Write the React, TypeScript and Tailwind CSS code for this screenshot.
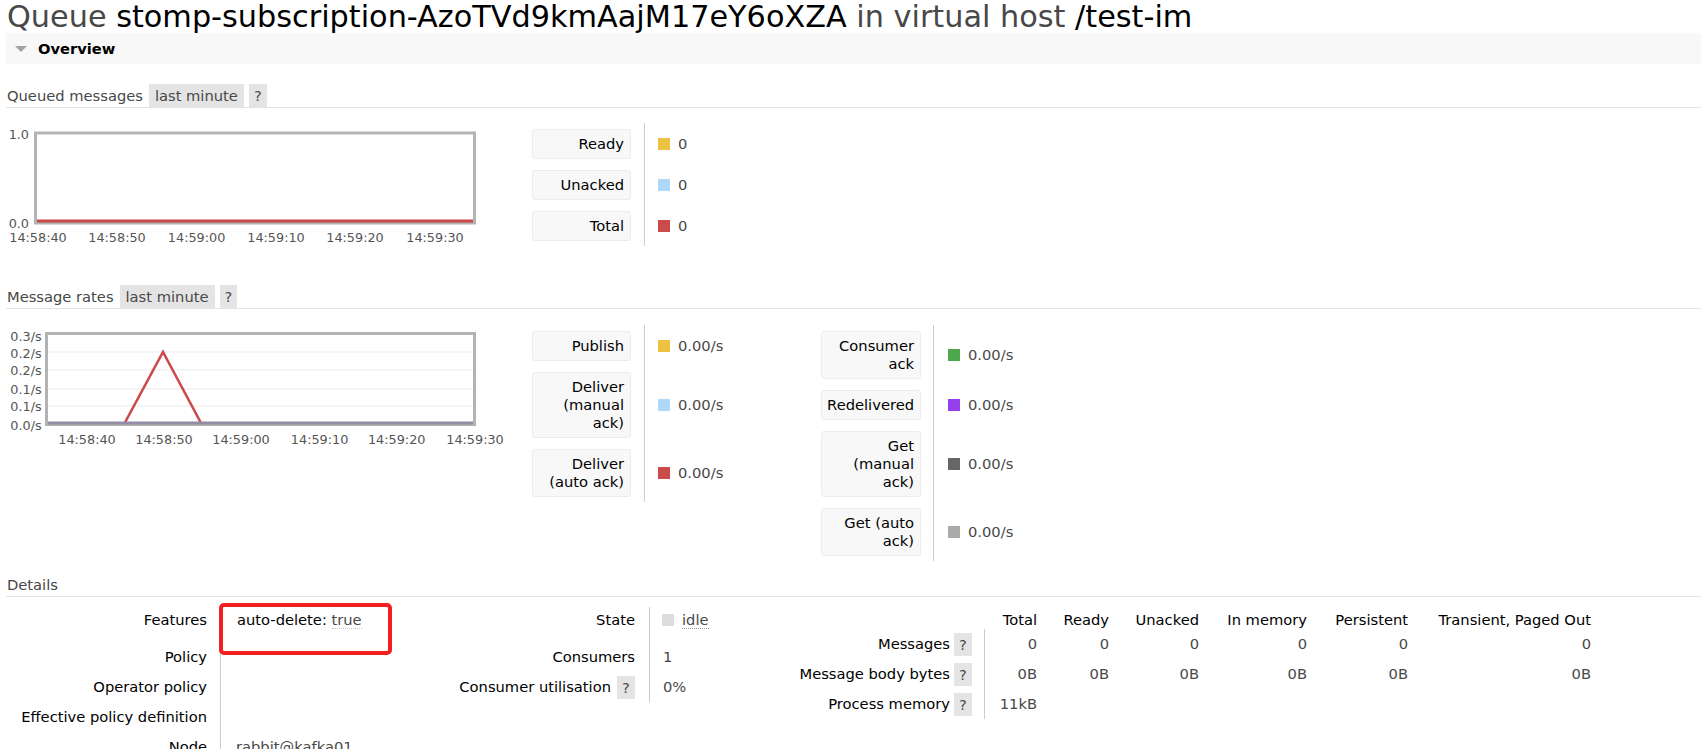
import React from 'react';

type LegendItem = { label: string; swatch: string; value: string };

const queued: LegendItem[] = [
  { label: 'Ready', swatch: 'bg-[#edc240]', value: '0' },
  { label: 'Unacked', swatch: 'bg-[#afd8f8]', value: '0' },
  { label: 'Total', swatch: 'bg-[#cb4b4b]', value: '0' },
];

const ratesLeft: LegendItem[] = [
  { label: 'Publish', swatch: 'bg-[#edc240]', value: '0.00/s' },
  { label: 'Deliver (manual ack)', swatch: 'bg-[#afd8f8]', value: '0.00/s' },
  { label: 'Deliver (auto ack)', swatch: 'bg-[#cb4b4b]', value: '0.00/s' },
];

const ratesRight: LegendItem[] = [
  { label: 'Consumer ack', swatch: 'bg-[#4da74d]', value: '0.00/s' },
  { label: 'Redelivered', swatch: 'bg-[#9440ed]', value: '0.00/s' },
  { label: 'Get (manual ack)', swatch: 'bg-[#666666]', value: '0.00/s' },
  { label: 'Get (auto ack)', swatch: 'bg-[#aaaaaa]', value: '0.00/s' },
];

const SectionHead = ({ title, range }: { title: string; range?: boolean }) => (
  <div className="flex items-start h-[24px] border-b border-[#e2e2e2]">
    <span className="pl-[1px] leading-[23px] text-[#484848]">{title}</span>
    {range && (
      <>
        <span className="ml-[6px] h-[23px] px-[6px] leading-[23px] bg-[#e4e4e4] text-[#484848]">last minute</span>
        <span className="ml-[5px] h-[23px] px-[5px] leading-[23px] bg-[#e4e4e4] text-[#484848]">?</span>
      </>
    )}
  </div>
);

const Legend = ({ items, wide, cols }: { items: LegendItem[]; wide?: boolean; cols: string }) => (
  <div className={cols}>
    {items.map((it) => (
      <React.Fragment key={it.label}>
        <div className={wide ? 'py-[5.5px] pr-[12px]' : 'py-[5.5px] pr-[13px]'}>
          <div
            className={
              wide
                ? 'w-[100px] bg-[#f8f8f8] border border-[#ececec] rounded-[3px] py-[5px] pl-[3px] pr-[6px] text-right leading-[18px] text-black'
                : 'w-[99px] bg-[#f8f8f8] border border-[#ececec] rounded-[3px] py-[5px] pl-[4px] pr-[6px] text-right leading-[18px] text-black'
            }
          >
            {it.label}
          </div>
        </div>
        <div className={wide ? 'border-l border-[#cccccc] pl-[14px] flex items-center py-[5.5px]' : 'border-l border-[#cccccc] pl-[13px] flex items-center py-[5.5px]'}>
          <span className={`w-[12px] h-[12px] shrink-0 ${it.swatch}`} />
          <span className="ml-[8px] text-[#484848]">{it.value}</span>
        </div>
      </React.Fragment>
    ))}
  </div>
);

const tick = { fontFamily: 'DejaVu Sans, sans-serif', fontSize: 12.8, fill: '#545454' };

const QueuedChart = () => {
  const xs = [
    [32, '14:58:40'],
    [111, '14:58:50'],
    [190.6, '14:59:00'],
    [270, '14:59:10'],
    [349, '14:59:20'],
    [429, '14:59:30'],
  ] as const;
  return (
    <svg width="526" height="123" className="block shrink-0">
      <rect x="29.5" y="10" width="439" height="90" fill="white" stroke="#b3b3b3" strokeWidth="3" />
      <line x1="31" y1="98" x2="467" y2="98" stroke="#cb4b4b" strokeWidth="3" />
      <text x="23" y="15.6" textAnchor="end" style={tick}>1.0</text>
      <text x="23" y="104.6" textAnchor="end" style={tick}>0.0</text>
      {xs.map(([x, t]) => (
        <text key={t} x={x} y="118.6" textAnchor="middle" style={tick}>{t}</text>
      ))}
    </svg>
  );
};

const RatesChart = () => {
  const ys = [
    [15.6, '0.3/s'],
    [33.2, '0.2/s'],
    [49.6, '0.2/s'],
    [68.6, '0.1/s'],
    [85.6, '0.1/s'],
    [104.6, '0.0/s'],
  ] as const;
  const xs = [
    [81, '14:58:40'],
    [158, '14:58:50'],
    [235, '14:59:00'],
    [313.6, '14:59:10'],
    [390.7, '14:59:20'],
    [469, '14:59:30'],
  ] as const;
  return (
    <svg width="526" height="123" className="block shrink-0">
      <rect x="40.5" y="8.5" width="428" height="91" fill="white" stroke="#b3b3b3" strokeWidth="3" />
      {[27, 45, 64, 81].map((y) => (
        <line key={y} x1="42" y1={y} x2="467" y2={y} stroke="#ececec" strokeWidth="1.2" />
      ))}
      <polyline points="118.7,98 157,27 195,98" fill="none" stroke="#cb4b4b" strokeWidth="2.6" strokeLinejoin="miter" />
      <line x1="42" y1="98" x2="467" y2="98" stroke="#958da6" strokeWidth="3" />
      {ys.map(([y, t], i) => (
        <text key={i} x="35.7" y={y} textAnchor="end" style={tick}>{t}</text>
      ))}
      {xs.map(([x, t]) => (
        <text key={t} x={x} y="118.6" textAnchor="middle" style={tick}>{t}</text>
      ))}
    </svg>
  );
};

const Help = ({ ml }: { ml: string }) => (
  <span className={`${ml} h-[23px] w-[18px] leading-[23px] text-center bg-[#e4e4e4] text-[#484848]`}>?</span>
);

export default function App() {
  const cols = ['Total', 'Ready', 'Unacked', 'In memory', 'Persistent', 'Transient, Paged Out'];
  const msgRows = [
    { label: 'Messages', vals: ['0', '0', '0', '0', '0', '0'] },
    { label: 'Message body bytes', vals: ['0B', '0B', '0B', '0B', '0B', '0B'] },
    { label: 'Process memory', vals: ['11kB', '', '', '', '', ''] },
  ];

  return (
    <div className="min-h-screen bg-white pl-[6px] font-['DejaVu_Sans',sans-serif] text-[14.7px] leading-[18px] text-black overflow-hidden">
      <h1 className="h-[33px] pl-[1px] text-[30.3px] leading-[33px] font-normal whitespace-nowrap">
        <span className="text-[#484848]">Queue </span>
        <span>stomp-subscription-AzoTVd9kmAajM17eY6oXZA</span>
        <span className="text-[#484848]"> in virtual host </span>
        <span>/test-im</span>
      </h1>

      <div className="h-[31px] bg-[#f8f8f8] flex items-center">
        <svg width="12" height="6" className="ml-[9px]">
          <polygon points="0,0 12,0 6,6" fill="#a3a3a3" />
        </svg>
        <span className="ml-[11px] font-bold">Overview</span>
      </div>

      <div className="mt-[20px]">
        <SectionHead title="Queued messages" range />
      </div>
      <div className="flex items-start mt-[15px]">
        <QueuedChart />
        <Legend items={queued} cols="grid grid-cols-[auto_auto]" />
      </div>

      <div className="mt-[39px]">
        <SectionHead title="Message rates" range />
      </div>
      <div className="flex items-start mt-[16px]">
        <RatesChart />
        <Legend items={ratesLeft} cols="grid grid-cols-[auto_177px] self-start" />
        <Legend items={ratesRight} wide cols="grid grid-cols-[auto_auto]" />
      </div>

      <div className="mt-[12px]">
        <SectionHead title="Details" />
      </div>

      <div className="flex items-start mt-[10px]">
        {/* features / policy */}
        <div className="grid grid-cols-[214px_200px] grid-rows-[35px_30px_30px_30px_30px]">
          <div className="flex items-center justify-end pr-[13px] pb-[9px]">Features</div>
          <div className="relative border-l border-[#cccccc] pl-[16px] flex items-center pb-[9px] whitespace-nowrap">
            <span>auto-delete:&nbsp;</span>
            <span className="text-[#484848] border-b border-dotted border-[#c8c8c8] leading-[17px]">true</span>
            <div className="absolute left-[-2px] top-[-4px] w-[173px] h-[52px] border-[4px] border-[#f31e1e] rounded-[5px]" />
          </div>
          <div className="flex items-center justify-end pr-[13px]">Policy</div>
          <div className="border-l border-[#cccccc]" />
          <div className="flex items-center justify-end pr-[13px]">Operator policy</div>
          <div className="border-l border-[#cccccc]" />
          <div className="flex items-center justify-end pr-[13px] whitespace-nowrap">Effective policy definition</div>
          <div className="border-l border-[#cccccc]" />
          <div className="flex items-center justify-end pr-[13px]">Node</div>
          <div className="border-l border-[#cccccc] pl-[15px] flex items-center text-[#484848]">rabbit@kafka01</div>
        </div>

        {/* state */}
        <div className="grid grid-cols-[229px_111px] grid-rows-[35px_30px_30px]">
          <div className="flex items-center justify-end pr-[14px] pb-[9px]">State</div>
          <div className="border-l border-[#cccccc] pl-[12px] flex items-center pb-[9px]">
            <span className="w-[12px] h-[12px] bg-[#dddddd]" />
            <span className="ml-[8px] text-[#484848] border-b border-dotted border-[#999999] leading-[17px]">idle</span>
          </div>
          <div className="flex items-center justify-end pr-[14px]">Consumers</div>
          <div className="border-l border-[#cccccc] pl-[13px] flex items-center text-[#484848]">1</div>
          <div className="flex items-center justify-end pr-[14px] whitespace-nowrap">
            Consumer utilisation
            <Help ml="ml-[6px]" />
          </div>
          <div className="border-l border-[#cccccc] pl-[13px] flex items-center text-[#484848]">0%</div>
        </div>

        {/* messages */}
        <div className="grid grid-cols-[224px_53px_72px_90px_108px_101px_183px] grid-rows-[22px_30px_30px_30px]">
          <div />
          {cols.map((c) => (
            <div key={c} className="flex items-end justify-end whitespace-nowrap">{c}</div>
          ))}
          {msgRows.map((r) => (
            <React.Fragment key={r.label}>
              <div className="flex items-center justify-end pr-[12px] whitespace-nowrap">
                {r.label}
                <Help ml="ml-[4px]" />
              </div>
              {r.vals.map((v, i) => (
                <div
                  key={i}
                  className={
                    i === 0
                      ? 'border-l border-[#cccccc] flex items-center justify-end text-[#484848]'
                      : 'flex items-center justify-end text-[#484848]'
                  }
                >
                  {v}
                </div>
              ))}
            </React.Fragment>
          ))}
        </div>
      </div>
    </div>
  );
}
